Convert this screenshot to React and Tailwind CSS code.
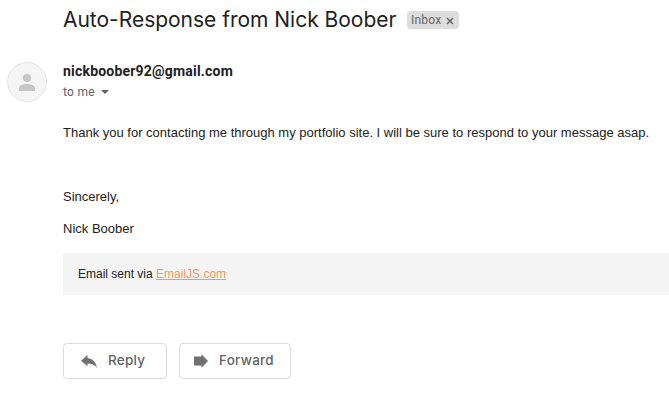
import React from "react";

function Subject() {
  return (
    <header className="flex h-[40px] items-center pl-[63px]">
      <h1 className="w-[344px] whitespace-nowrap font-['Inter',sans-serif] text-[21px] leading-[28px] tracking-[-0.02px] text-[#202124]">
        Auto-Response from Nick Boober
      </h1>
      <span className="flex h-[18px] w-[52px] items-center rounded-[4px] bg-[#ddd] pl-[4px] font-['Roboto',sans-serif] text-[12px] leading-[18px] tracking-[0.2px] text-[#666]">
        Inbox
        <svg className="ml-[5px] mt-px" width="8" height="8" viewBox="0 0 8 8" fill="none" stroke="#666" strokeWidth="1.5">
          <path d="M1 1l6 6M7 1L1 7" />
        </svg>
      </span>
    </header>
  );
}

function Avatar() {
  return (
    <div className="flex h-[40px] w-[40px] items-center justify-center rounded-full border border-[#e6e6e6] bg-[#f5f5f5]">
      <svg width="16" height="17" viewBox="0 0 16 17" fill="#c6c6c6">
        <circle cx="8" cy="4" r="4" />
        <path d="M0 17v-2.700C0 11.300 5 10 8 10s8 1.300 8 4.300V17z" />
      </svg>
    </div>
  );
}

function Sender() {
  return (
    <section className="flex pl-[7px] pt-[22px] font-['Roboto',sans-serif]">
      <Avatar />
      <div className="ml-[16px]">
        <p className="h-[19px] text-[14px] font-bold leading-[19px] tracking-[0.2px] text-[#202124]">nickboober92@gmail.com</p>
        <p className="flex h-[21px] items-center pt-[1px] text-[12px] leading-[21px] tracking-[0.3px] text-[#5f6368]">
          to me
          <svg className="ml-[6px]" width="8" height="4" viewBox="0 0 8 4" fill="#5f6368">
            <path d="M0 0h8L4 4z" />
          </svg>
        </p>
      </div>
    </section>
  );
}

function ActionButton({ label, className, children }) {
  return (
    <button className={`flex h-[36px] items-center rounded-[4px] border border-[#dadce0] bg-white font-['Inter',sans-serif] text-[13.5px] font-medium tracking-[0.25px] text-[#5f6368] ${className}`}>
      {children}
      <span className="mb-[2px]">{label}</span>
    </button>
  );
}

export default function App() {
  return (
    <main className="h-[407px] w-full overflow-hidden bg-white">
      <Subject />
      <Sender />
      <article className="ml-[63px] mt-[21px] font-['Liberation_Sans',Arial,sans-serif] text-[13px] leading-[20px] text-[#222]">
        <p className="whitespace-nowrap">Thank you for contacting me through my portfolio site. I will be sure to respond to your message asap.</p>
        <p className="mt-[44px]">Sincerely,</p>
        <p className="mt-[12px]">Nick Boober</p>
        <div className="mt-[14px] flex h-[42px] items-center bg-[#f4f4f4] pl-[15px] text-[12px]">
          <p>
            Email sent via <a className="text-[#f5985c] underline">EmailJS.com</a>
          </p>
        </div>
      </article>
      <footer className="ml-[63px] mt-[48px] flex gap-[12px]">
        <ActionButton label="Reply" className="w-[104px] gap-[11px] pl-[17px]">
          <svg width="16" height="13" viewBox="0 0 16 13" fill="#707070">
            <path d="M6.500 2.900V0L0 5.700l6.500 5.600V8.400C10.500 8.400 13.500 9.600 16 12.800c-1-5.500-4-9.200-9.500-9.900z" />
          </svg>
        </ActionButton>
        <ActionButton label="Forward" className="w-[112px] gap-[11px] pl-[14px]">
          <svg width="14" height="14" viewBox="0 0 14 14" fill="#707070">
            <path d="M0 2.500h7.500V0.200L14 7l-6.500 6.800v-2.300H0z" />
          </svg>
        </ActionButton>
      </footer>
    </main>
  );
}
